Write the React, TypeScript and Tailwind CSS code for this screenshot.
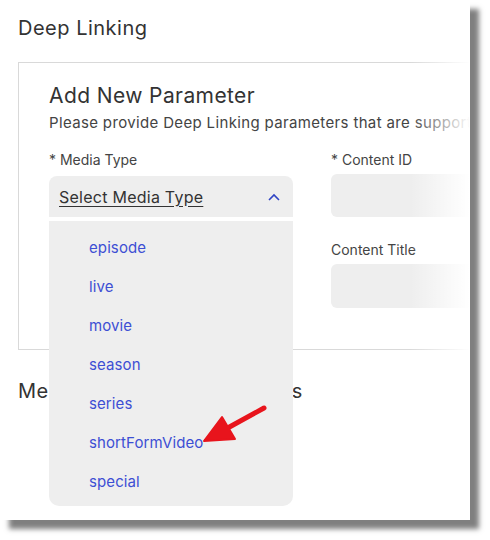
import React from "react";

const items = ["episode", "live", "movie", "season", "series", "shortFormVideo", "special"];

export default function App() {
  return (
    <div className="w-[490px] h-[540px] bg-white" style={{ fontFamily: "Inter, 'Noto Sans', sans-serif" }}>
      <div className="relative w-[470px] h-[520px] bg-white shadow-[9px_9px_5px_rgba(0,0,0,0.5)] overflow-hidden">
        <div className="pl-[18px] pt-[14px]">
          <h1 className="text-[20px] leading-[28px] text-[#333] font-normal tracking-[0.5px]">Deep Linking</h1>
          <div className="mt-[20px] w-[520px] h-[288px] border border-[#d9d9d9] pl-[30px] pt-[19px]">
            <h2 className="text-[21px] leading-[28px] text-[#333] tracking-[0.4px]">Add New Parameter</h2>
            <p className="mt-[3px] text-[15px] leading-[20px] text-[#444] whitespace-nowrap tracking-[0.35px]">
              Please provide Deep Linking parameters that are supported by your application
            </p>
            <div className="mt-[17px] flex gap-[38px]">
              <div className="w-[244px] relative">
                <div className="text-[14px] leading-[20px] text-[#444]">* Media Type</div>
                <div className="mt-[6px] h-[41px] bg-[#eeeeee] rounded-t-[8px] flex items-center justify-between pl-[10px] pr-[10px]">
                  <span className="text-[16px] text-[#333] underline underline-offset-[3px] tracking-[0.25px]">Select Media Type</span>
                  <svg width="14" height="10" viewBox="0 0 14 10" className="mr-[2px]">
                    <path d="M2 8 L7 3 L12 8" fill="none" stroke="#2f44c4" strokeWidth="1.6" />
                  </svg>
                </div>
                <ul className="absolute left-0 top-[71px] w-[244px] bg-[#eeeeee] rounded-b-[10px] pt-[8px] pb-[4px] z-10">
                  {items.map((it) => (
                    <li key={it} className="h-[39px] flex items-center pl-[40px] text-[15px] text-[#3d4fd4] tracking-[0.1px]">
                      {it}
                    </li>
                  ))}
                </ul>
              </div>
              <div className="w-[200px]">
                <div className="text-[14px] leading-[20px] text-[#444]">* Content ID</div>
                <div className="mt-[4px] h-[43px] bg-[#eeeeee] rounded-[6px]"></div>
                <div className="mt-[23px] text-[14px] leading-[20px] text-[#444]">Content Title</div>
                <div className="mt-[4px] h-[44px] bg-[#eeeeee] rounded-[6px]"></div>
              </div>
            </div>
          </div>
          <h2 className="mt-[27px] text-[20px] leading-[28px] text-[#333] tracking-[0.5px]">Media Deep Link Parameters</h2>
        </div>
        <div className="absolute right-0 top-0 bottom-0 w-[60px] bg-linear-to-r from-white/0 to-white"></div>
        <svg className="absolute left-0 top-0 z-20" width="470" height="520" viewBox="0 0 470 520">
          <line x1="264" y1="408" x2="224" y2="430" stroke="#e8141c" strokeWidth="5" strokeLinecap="round" />
          <polygon points="204,441 222,417 235,439" fill="#e8141c" stroke="#e8141c" strokeWidth="2" strokeLinejoin="round" />
        </svg>
      </div>
    </div>
  );
}
